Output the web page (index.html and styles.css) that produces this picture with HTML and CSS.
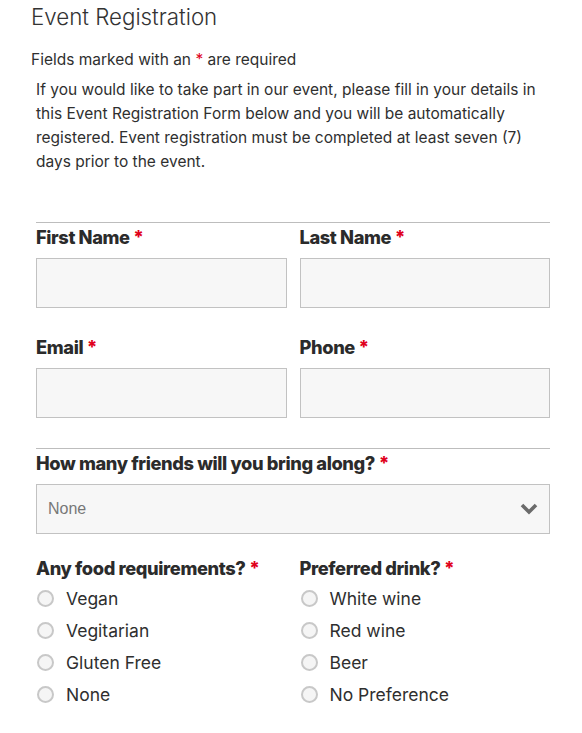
FILE: index.html
```html
<!DOCTYPE html>
<html lang="en">
<head>
<meta charset="utf-8">
<title>Event Registration</title>
<link rel="stylesheet" href="styles.css">
</head>
<body>
<div class="page">
  <h1 class="title">Event Registration</h1>
  <p class="required-note">Fields marked with an <span class="req">*</span> are required</p>
  <form class="form">
    <p class="intro">If you would like to take part in our event, please fill in your details in this Event Registration Form below and you will be automatically registered. Event registration must be completed at least seven (7) days prior to the event.</p>

    <div class="section section-first">
      <div class="row">
        <div class="field">
          <label class="label">First Name <span class="req">*</span></label>
          <input class="input" type="text">
        </div>
        <div class="field">
          <label class="label">Last Name <span class="req">*</span></label>
          <input class="input" type="text">
        </div>
      </div>
      <div class="row row-next">
        <div class="field">
          <label class="label">Email <span class="req">*</span></label>
          <input class="input" type="text">
        </div>
        <div class="field">
          <label class="label">Phone <span class="req">*</span></label>
          <input class="input" type="text">
        </div>
      </div>
    </div>

    <div class="section section-second">
      <label class="label">How many friends will you bring along? <span class="req">*</span></label>
      <div class="select">
        <span class="select-value">None</span>
        <svg class="chevron" width="18" height="12" viewBox="0 0 18 12"><path d="M2 2 L9 9 L16 2" fill="none" stroke="#6b6b6b" stroke-width="3.6" stroke-linecap="butt" stroke-linejoin="miter"/></svg>
      </div>

      <div class="row row-radios">
        <div class="field">
          <div class="label">Any food requirements? <span class="req">*</span></div>
          <ul class="radios">
            <li class="radio"><span class="dot"></span>Vegan</li>
            <li class="radio"><span class="dot"></span>Vegitarian</li>
            <li class="radio"><span class="dot"></span>Gluten Free</li>
            <li class="radio"><span class="dot"></span>None</li>
          </ul>
        </div>
        <div class="field">
          <div class="label">Preferred drink? <span class="req">*</span></div>
          <ul class="radios">
            <li class="radio"><span class="dot"></span>White wine</li>
            <li class="radio"><span class="dot"></span>Red wine</li>
            <li class="radio"><span class="dot"></span>Beer</li>
            <li class="radio"><span class="dot"></span>No Preference</li>
          </ul>
        </div>
      </div>
    </div>
  </form>
</div>
</body>
</html>
```

FILE: styles.css
```css
html, body {
  margin: 0;
  padding: 0;
  background: #fff;
}
body {
  font-family: "Inter", "Liberation Sans", sans-serif;
  color: #2f2f2f;
}
.page {
  padding: 0 32px 0 31px;
}
.title {
  margin: 0;
  padding-top: 1px;
  font-size: 22.3px;
  font-weight: 300;
  line-height: 32px;
  color: #333;
}
.required-note {
  margin: 17px 0 0;
  font-size: 15.5px;
  line-height: 20px;
}
.req {
  color: #e0001b;
}
.form {
  padding-left: 5px;
}
.intro {
  margin: 8px 0 0;
  font-size: 15.5px;
  line-height: 24px;
}
.section {
  border-top: 1px solid #bdbdbd;
}
.section-first {
  margin-top: 48px;
}
.section-second {
  margin-top: 30px;
}
.row {
  display: grid;
  grid-template-columns: 1fr 1fr;
  column-gap: 13px;
}
.row-next {
  margin-top: 25px;
}
.label {
  display: block;
  font-size: 18.3px;
  font-weight: 800;
  letter-spacing: -0.4px;
  line-height: 28px;
  color: #2b2b2b;
  margin-top: 0;
}
.input {
  display: block;
  box-sizing: border-box;
  width: 100%;
  height: 50px;
  margin: 7px 0 0;
  border: 1px solid #c2c2c2;
  background: #f7f7f7;
  border-radius: 0;
}
.select {
  box-sizing: border-box;
  height: 50px;
  margin-top: 7px;
  border: 1px solid #c2c2c2;
  background: #f7f7f7;
  display: flex;
  align-items: center;
  justify-content: space-between;
  padding: 0 11px 0 11px;
}
.select-value {
  font-family: "Liberation Sans", sans-serif;
  font-size: 16px;
  color: #777;
}
.chevron {
  display: block;
}
.row-radios {
  margin-top: 20px;
}
.radios {
  list-style: none;
  margin: 0;
  padding: 0;
}
.radio {
  display: flex;
  align-items: center;
  height: 32px;
  font-size: 17.5px;
  color: #2f2f2f;
}
.dot {
  box-sizing: border-box;
  width: 17px;
  height: 17px;
  border: 2px solid #c8c8c8;
  border-radius: 50%;
  background: #f5f5f5;
  margin: 0 12px 0 1px;
  flex: none;
}
```
